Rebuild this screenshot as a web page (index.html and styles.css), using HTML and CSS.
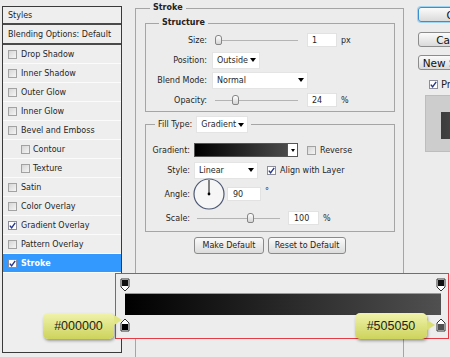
FILE: index.html
```html
<!DOCTYPE html>
<html lang="en">
<head>
  <meta charset="UTF-8" />
  <title>Layer Style - Stroke</title>
  <link rel="stylesheet" href="styles.css">
</head>
<body>
  <div class="dialog">
    <div class="styles-list">
      <div class="list-head">Styles</div>
      <div class="list-blend">Blending Options: Default</div>
      <div class="list-item"><span class="cb"></span>Drop Shadow</div>
      <div class="list-item"><span class="cb"></span>Inner Shadow</div>
      <div class="list-item"><span class="cb"></span>Outer Glow</div>
      <div class="list-item"><span class="cb"></span>Inner Glow</div>
      <div class="list-item"><span class="cb"></span>Bevel and Emboss</div>
      <div class="list-item sub"><span class="cb"></span>Contour</div>
      <div class="list-item sub"><span class="cb"></span>Texture</div>
      <div class="list-item"><span class="cb"></span>Satin</div>
      <div class="list-item"><span class="cb"></span>Color Overlay</div>
      <div class="list-item"><span class="cb checked"><svg viewBox="0 0 7 7"><path d="M0.8 3.6l1.8 2.2 3.6-5" /></svg></span>Gradient Overlay</div>
      <div class="list-item"><span class="cb"></span>Pattern Overlay</div>
      <div class="list-item active"><span class="cb checked"><svg viewBox="0 0 7 7"><path d="M0.8 3.6l1.8 2.2 3.6-5" /></svg></span>Stroke</div>
    </div>

    <fieldset class="group stroke-group">
      <legend class="group-title">Stroke</legend>

      <fieldset class="group structure">
        <legend class="group-title">Structure</legend>
        <div class="field">
          <span class="field-label">Size:</span>
          <div class="slider"><span class="thumb" style="left: 0px"></span></div>
          <span class="num">1</span>
          <span class="unit">px</span>
        </div>
        <div class="field">
          <span class="field-label">Position:</span>
          <span class="select select-position">Outside</span>
        </div>
        <div class="field">
          <span class="field-label">Blend Mode:</span>
          <span class="select select-blend">Normal</span>
        </div>
        <div class="field">
          <span class="field-label">Opacity:</span>
          <div class="slider"><span class="thumb" style="left: 17px"></span></div>
          <span class="num">24</span>
          <span class="unit">%</span>
        </div>
      </fieldset>

      <fieldset class="group fill">
        <legend class="fill-legend"><span>Fill Type:</span><span class="select select-fill">Gradient</span></legend>
        <div class="field">
          <span class="field-label">Gradient:</span>
          <div class="gradient-picker"><span class="gradient-swatch"></span><span class="gradient-arrow"></span></div>
          <span class="cb cb-spaced"></span>
          <span class="check-text">Reverse</span>
        </div>
        <div class="field">
          <span class="field-label">Style:</span>
          <span class="select select-style">Linear</span>
          <span class="cb checked cb-spaced"><svg viewBox="0 0 7 7"><path d="M0.8 3.6l1.8 2.2 3.6-5" /></svg></span>
          <span class="check-text">Align with Layer</span>
        </div>
        <div class="field field-angle">
          <span class="field-label">Angle:</span>
          <svg class="dial" width="32" height="32" viewBox="0 0 32 32">
            <circle cx="16" cy="16" r="15" fill="#f6f6f6" stroke="#4d5873" stroke-width="1.2" />
            <line x1="16" y1="16" x2="16" y2="2" stroke="#111" stroke-width="1" />
            <circle cx="16" cy="16" r="1.4" fill="#000" />
          </svg>
          <span class="num num-angle">90</span>
          <span class="degree">°</span>
        </div>
        <div class="field">
          <span class="field-label">Scale:</span>
          <div class="slider"><span class="thumb" style="left: 50px"></span></div>
          <span class="num num-scale">100</span>
          <span class="unit">%</span>
        </div>
      </fieldset>

      <div class="btn-row">
        <button class="btn btn-default">Make Default</button>
        <button class="btn btn-reset">Reset to Default</button>
      </div>
    </fieldset>

    <div class="side">
      <button class="side-btn ok">OK</button>
      <button class="side-btn">Cancel</button>
      <button class="side-btn">New Style...</button>
      <div class="preview-check"><span class="cb checked"><svg viewBox="0 0 7 7"><path d="M0.8 3.6l1.8 2.2 3.6-5" /></svg></span>Preview</div>
      <div class="preview"><div class="preview-swatch"></div></div>
    </div>
  </div>

  <div class="gradient-editor">
    <div class="stops">
      <svg class="stop" width="10" height="14" viewBox="0 0 10 14"><path d="M1 1h8v8l-4 4l-4-4z" fill="#fff" stroke="#333" /><rect x="2" y="2" width="6" height="6" fill="#111" /></svg>
      <svg class="stop" width="10" height="14" viewBox="0 0 10 14"><path d="M1 1h8v8l-4 4l-4-4z" fill="#fff" stroke="#333" /><rect x="2" y="2" width="6" height="6" fill="#111" /></svg>
    </div>
    <div class="gradient-bar"></div>
    <div class="stops">
      <svg class="stop" width="10" height="14" viewBox="0 0 10 14"><path d="M5 1l4 4v8h-8v-8z" fill="#fff" stroke="#333" /><rect x="2" y="6" width="6" height="6" fill="#000" /></svg>
      <svg class="stop" width="10" height="14" viewBox="0 0 10 14"><path d="M5 1l4 4v8h-8v-8z" fill="#fff" stroke="#333" /><rect x="2" y="6" width="6" height="6" fill="#505050" /></svg>
    </div>
  </div>

  <div class="tip tip-start">#000000</div>
  <div class="tip tip-end">#505050</div>
</body>
</html>
```

FILE: styles.css
```css
* {
  box-sizing: border-box;
}

body {
  margin: 0;
  width: 450px;
  height: 357px;
  overflow: hidden;
  position: relative;
  background: #ececec;
  font-family: "DejaVu Sans", sans-serif;
  font-size: 8px;
  color: #1f1f1f;
}

/* the dialog is cropped on the right and bottom, like the screenshot */
.dialog {
  display: flex;
  align-items: flex-start;
  width: 450px;
  height: 357px;
  overflow: hidden;
  padding-left: 2px;
}

/* left styles list */

.styles-list {
  flex-shrink: 0;
  width: 120px;
  height: 347px;
  margin-top: 6px;
  border: 1px solid #3a3a3a;
  background: #eeeeee;
}

.list-head,
.list-blend {
  display: flex;
  align-items: center;
  padding-left: 5px;
  border-bottom: 2px solid #4a4a4a;
}

.list-head {
  height: 18px;
}

.list-blend {
  height: 20px;
}

.list-item {
  display: flex;
  align-items: center;
  gap: 4px;
  height: 19px;
  padding-left: 5px;
  border-bottom: 1px solid #fbfbfb;
}

.list-item.sub {
  padding-left: 18px;
  gap: 3px;
}

.list-item.active {
  background: #3399ff;
  color: #fff;
  font-weight: bold;
}

.cb {
  flex-shrink: 0;
  display: inline-flex;
  align-items: center;
  justify-content: center;
  width: 9px;
  height: 9px;
  border: 1px solid #a2a2a2;
  background: linear-gradient(135deg, #d6d6d6, #f5f5f5);
}

.cb.checked {
  background: #fff;
  border-color: #8d8d9a;
}

.cb svg {
  width: 7px;
  height: 7px;
  fill: none;
  stroke: #26378c;
  stroke-width: 1.4;
}

/* stroke panel */

.group {
  margin: 0;
  padding: 0;
  min-width: 0;
  border: 1px solid #a5a5a5;
}

.group-title {
  padding: 0 3px;
  line-height: 12px;
  font-weight: bold;
  color: #222;
}

.stroke-group {
  flex-shrink: 0;
  width: 269px;
  height: 420px;
  margin: 2px 0 0 13px;
  padding: 0 8px 0 9px;
}

.stroke-group > legend {
  margin-left: 5px;
}

.structure {
  margin-top: 3px;
  padding: 1px 0 1px;
}

.structure > legend {
  margin-left: 13px;
}

.field {
  display: flex;
  align-items: center;
  height: 20px;
}

.field-label {
  flex-shrink: 0;
  text-align: right;
}

.structure .field-label {
  width: 61px;
  margin-right: 5px;
}

.fill .field-label {
  width: 44px;
  margin-right: 4px;
}

.slider {
  position: relative;
  flex-shrink: 0;
  width: 83px;
  height: 12px;
  margin-left: 3px;
}

.slider::before {
  content: "";
  position: absolute;
  left: 0;
  right: 0;
  top: 6px;
  border-top: 1px solid #b4b4b4;
}

.thumb {
  position: absolute;
  top: 1px;
  width: 7px;
  height: 10px;
  border: 1px solid #858585;
  border-radius: 3px 3px 2px 2px;
  background: linear-gradient(#ffffff, #d4d4d4);
}

.num {
  flex-shrink: 0;
  width: 30px;
  height: 14px;
  margin-left: 9px;
  padding-left: 4px;
  line-height: 13px;
  background: #fff;
  border: 1px solid #e2e2e2;
}

.unit {
  margin-left: 4px;
}

.select {
  display: flex;
  align-items: center;
  justify-content: space-between;
  flex-shrink: 0;
  height: 17px;
  padding: 0 3px 0 4px;
  background: #fff;
  border: 1px solid #e4e4e4;
}

.select::after {
  content: "";
  border-left: 3.5px solid transparent;
  border-right: 3.5px solid transparent;
  border-top: 4px solid #000;
}

.select-position {
  width: 48px;
}

.select-blend {
  width: 96px;
}

.select-fill {
  width: 52px;
  margin-left: 4px;
}

.select-style {
  width: 64px;
}

.fill {
  margin-top: 4px;
  padding: 7px 0 3px;
}

.fill-legend {
  display: flex;
  align-items: center;
  margin-left: 9px;
  padding: 0 3px;
  height: 17px;
}

.gradient-picker {
  display: flex;
  flex-shrink: 0;
  width: 104px;
  height: 14px;
  border: 1px solid #555;
  background: #fff;
}

.gradient-swatch {
  flex: 1;
  background: linear-gradient(to right, #000, #4a4a4a);
  border-right: 1px solid #555;
}

.gradient-arrow {
  display: flex;
  align-items: center;
  justify-content: center;
  width: 9px;
}

.gradient-arrow::after {
  content: "";
  border-left: 2.5px solid transparent;
  border-right: 2.5px solid transparent;
  border-top: 3px solid #000;
}

.cb-spaced {
  margin-left: 9px;
}

.check-text {
  margin-left: 4px;
}

.field-angle {
  height: 28px;
}

.dial {
  flex-shrink: 0;
  margin-left: -1px;
}

.num-angle {
  width: 34px;
  margin-left: 2px;
  padding-left: 5px;
}

.degree {
  align-self: flex-start;
  margin: 7px 0 0 4px;
}

.num-scale {
  width: 31px;
  margin-left: 8px;
  padding-left: 5px;
}

.btn-row {
  display: flex;
  justify-content: center;
  gap: 4px;
  margin-top: 5px;
}

.btn {
  height: 17px;
  padding: 0;
  font-family: inherit;
  font-size: 8px;
  color: #222;
  border: 1px solid #8a8a8a;
  border-radius: 3px;
  background: linear-gradient(#fafafa, #dcdcdc);
}

.btn-default {
  width: 70px;
}

.btn-reset {
  width: 78px;
}

/* right column */

.side {
  flex-shrink: 0;
  display: flex;
  flex-direction: column;
  align-items: flex-start;
  width: 80px;
  margin-left: 14px;
}

.side-btn {
  width: 72px;
  height: 15px;
  margin-top: 10px;
  padding: 0;
  font-family: inherit;
  font-size: 10.5px;
  line-height: 12px;
  color: #111;
  border: 1px solid #8c8c8c;
  border-radius: 3px;
  background: linear-gradient(#fbfbfb, #dadada);
}

.side-btn.ok {
  margin-top: 7px;
  border-color: #3a8fcf;
  box-shadow: 0 0 0 1px #9fd3f2;
}

.side-btn:nth-child(3) {
  margin-top: 8px;
}

.preview-check {
  display: flex;
  align-items: center;
  gap: 3px;
  margin: 9px 0 0 11px;
  font-size: 10px;
}

.preview {
  width: 60px;
  height: 57px;
  margin: 5px 0 0 7px;
  padding: 16px 0 0 15px;
  background: #cdcdcd;
  border: 1px solid #bdbdbd;
}

.preview-swatch {
  width: 45px;
  height: 27px;
  background: linear-gradient(to right, #3c3c3c, #5a5a5a);
}

/* highlighted gradient editor */

.gradient-editor {
  position: absolute;
  left: 115px;
  top: 273px;
  width: 334px;
  height: 66px;
  padding: 4px 0 0 9px;
  border: 1px solid #e23c46;
  background: #ededed;
}

.stops {
  display: flex;
  justify-content: space-between;
  width: 326px;
  margin-left: -5px;
  height: 14px;
}

.stop {
  display: block;
}

.gradient-bar {
  width: 316px;
  height: 22px;
  margin: 1px 0 3px;
  border-top: 1px solid #9a9a9a;
  background: linear-gradient(to right, #000, #505050);
}

.tip {
  position: absolute;
  top: 313px;
  height: 26px;
  display: flex;
  align-items: center;
  justify-content: center;
  font-family: "Liberation Sans", sans-serif;
  font-size: 12.5px;
  color: #1e1e1e;
  border-radius: 5px;
  background: linear-gradient(#f0f3ab, #cdd35b);
  box-shadow: 1px 2px 3px rgba(0, 0, 0, 0.35);
}

.tip::after {
  content: "";
  position: absolute;
  right: -8px;
  border-left: 8px solid #e1e584;
  border-top: 5px solid transparent;
  border-bottom: 5px solid transparent;
}

.tip-start {
  left: 43px;
  width: 71px;
}

.tip-start::after {
  top: 2px;
}

.tip-end {
  left: 355px;
  width: 72px;
}

.tip-end::after {
  top: 7px;
  border-left-color: #dadf74;
}
```
